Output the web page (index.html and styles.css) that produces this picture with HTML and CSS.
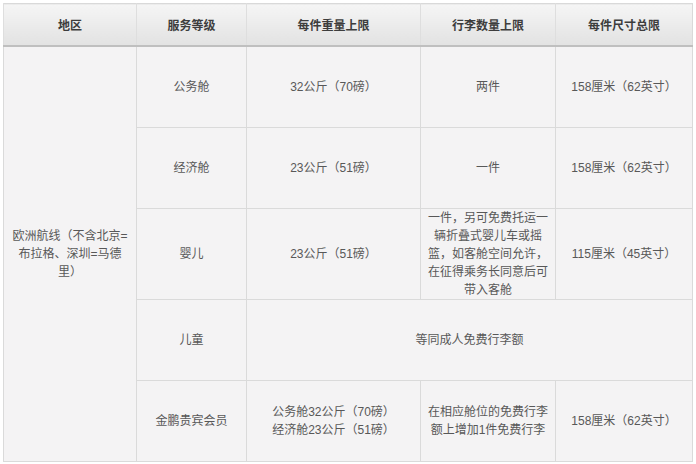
FILE: index.html
```html
<!DOCTYPE html>
<html lang="zh-CN">
<head>
<meta charset="utf-8">
<link rel="stylesheet" href="styles.css">
</head>
<body>
<table class="baggage">
  <colgroup>
    <col class="c1"><col class="c2"><col class="c3"><col class="c4"><col class="c5">
  </colgroup>
  <thead>
    <tr class="head">
      <th>地区</th>
      <th>服务等级</th>
      <th>每件重量上限</th>
      <th>行李数量上限</th>
      <th>每件尺寸总限</th>
    </tr>
  </thead>
  <tbody>
    <tr class="r1">
      <td rowspan="5">欧洲航线（不含北京=布拉格、深圳=马德里）</td>
      <td>公务舱</td>
      <td>32公斤（70磅）</td>
      <td>两件</td>
      <td>158厘米（62英寸）</td>
    </tr>
    <tr class="r2">
      <td>经济舱</td>
      <td>23公斤（51磅）</td>
      <td>一件</td>
      <td>158厘米（62英寸）</td>
    </tr>
    <tr class="r3">
      <td>婴儿</td>
      <td>23公斤（51磅）</td>
      <td>一件，另可免费托运一辆折叠式婴儿车或摇篮，如客舱空间允许，在征得乘务长同意后可带入客舱</td>
      <td>115厘米（45英寸）</td>
    </tr>
    <tr class="r4">
      <td>儿童</td>
      <td colspan="3">等同成人免费行李额</td>
    </tr>
    <tr class="r5">
      <td>金鹏贵宾会员</td>
      <td>公务舱32公斤（70磅）<br>经济舱23公斤（51磅）</td>
      <td>在相应舱位的免费行李额上增加1件免费行李</td>
      <td>158厘米（62英寸）</td>
    </tr>
  </tbody>
</table>
</body>
</html>
```
FILE: styles.css
```css
html, body {
  margin: 0;
  padding: 0;
  background: #ffffff;
}

body {
  padding: 3px 0 0 3px;
  font-family: "Liberation Sans", "Noto Sans CJK SC", sans-serif;
  font-size: 12px;
  color: #585858;
}

.baggage {
  border-collapse: collapse;
  table-layout: fixed;
  width: 689px;
  border: 1px solid #d9d9d9;
}

.c1 { width: 133px; }
.c2 { width: 110px; }
.c3 { width: 174px; }
.c4 { width: 135px; }
.c5 { width: 137px; }

.head {
  height: 42px;
}

.head th {
  background: linear-gradient(#f5f5f5, #e2e2e2);
  border-left: 1px solid #dedede;
  border-bottom: 2px solid #bfbfbf;
  color: #3d3d3d;
  font-weight: bold;
  font-size: 12px;
  padding: 0 6px;
  text-align: center;
}

.baggage td {
  background: #f4f3f4;
  border: 1px solid #dadada;
  text-align: center;
  vertical-align: middle;
  padding: 0 6px;
  line-height: 18px;
}

.r1 { height: 82px; }
.r2 { height: 81px; }
.r3 { height: 91px; }
.r4 { height: 81px; }
.r5 { height: 81px; }
```
